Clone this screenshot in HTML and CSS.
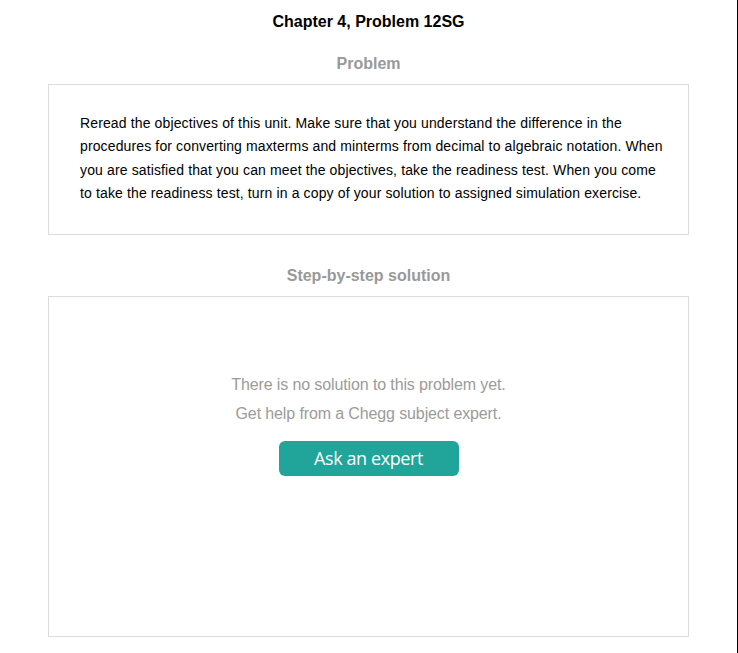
FILE: index.html
```html
<!DOCTYPE html>
<html>
<head>
<meta charset="utf-8">
<link rel="stylesheet" href="styles.css">
</head>
<body>
<div class="page">
  <h1 class="title">Chapter 4, Problem 12SG</h1>
  <h2 class="section-head">Problem</h2>
  <div class="card problem">
    <p>Reread the objectives of this unit. Make sure that you understand the difference in the procedures for converting maxterms and minterms from decimal to algebraic notation. When you are satisfied that you can meet the objectives, take the readiness test. When you come to take the readiness test, turn in a copy of your solution to assigned simulation exercise.</p>
  </div>
  <h2 class="section-head second">Step-by-step solution</h2>
  <div class="card solution">
    <p class="empty">There is no solution to this problem yet.<br>Get help from a Chegg subject expert.</p>
    <button class="ask">Ask an expert</button>
  </div>
</div>
</body>
</html>
```

FILE: styles.css
```css
html, body {
  margin: 0;
  padding: 0;
  background: #fff;
}
body {
  font-family: "Liberation Sans", Arial, sans-serif;
}
.page {
  width: 737px;
  height: 653px;
  border-right: 1px solid #000;
  box-sizing: content-box;
  padding-top: 12px;
}
.title {
  margin: 0;
  font-size: 16px;
  font-weight: bold;
  color: #000;
  text-align: center;
  line-height: 19px;
}
.section-head {
  margin: 23px 0 11px;
  font-size: 16px;
  font-weight: bold;
  color: #999;
  text-align: center;
  line-height: 19px;
}
.section-head.second {
  margin-top: 31px;
}
.card {
  margin: 0 48px;
  border: 1px solid #dcdcdc;
  box-sizing: border-box;
}
.problem {
  height: 151px;
  padding: 27px 22px 0 31px;
}
.problem p {
  margin: 0;
  font-size: 14px;
  letter-spacing: 0.13px;
  line-height: 23.4px;
  color: #000;
}
.solution {
  height: 341px;
  padding-top: 73px;
  display: flex;
  flex-direction: column;
  align-items: center;
}
.empty {
  margin: 0;
  font-size: 16px;
  letter-spacing: -0.12px;
  line-height: 29px;
  color: #9b9b9b;
  text-align: center;
}
.ask {
  margin-top: 13px;
  width: 180px;
  height: 35px;
  border: none;
  border-radius: 6px;
  background: #21a49a;
  color: #fff;
  font-family: "Open Sans", "Noto Sans", sans-serif;
  font-size: 18px;
  letter-spacing: -0.4px;
  padding: 0;
  line-height: 35px;
}
```
